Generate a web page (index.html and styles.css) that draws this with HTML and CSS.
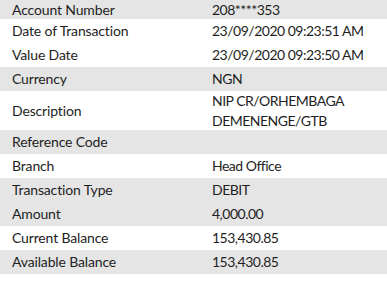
FILE: index.html
```html
<!DOCTYPE html>
<html>
<head>
<meta charset="utf-8">
<link rel="stylesheet" href="styles.css">
</head>
<body>
<div class="details">
  <div class="row shade first"><div class="label">Account Number</div><div class="value">208****353</div></div>
  <div class="row"><div class="label">Date of Transaction</div><div class="value">23/09/2020 09:23:51 AM</div></div>
  <div class="row"><div class="label">Value Date</div><div class="value">23/09/2020 09:23:50 AM</div></div>
  <div class="row shade"><div class="label">Currency</div><div class="value">NGN</div></div>
  <div class="row tall"><div class="label">Description</div><div class="value">NIP CR/ORHEMBAGA<br>DEMENENGE/GTB</div></div>
  <div class="row shade"><div class="label">Reference Code</div><div class="value"></div></div>
  <div class="row"><div class="label">Branch</div><div class="value">Head Office</div></div>
  <div class="row shade"><div class="label">Transaction Type</div><div class="value">DEBIT</div></div>
  <div class="row shade"><div class="label">Amount</div><div class="value">4,000.00</div></div>
  <div class="row"><div class="label">Current Balance</div><div class="value">153,430.85</div></div>
  <div class="row shade"><div class="label">Available Balance</div><div class="value">153,430.85</div></div>
</div>
</body>
</html>
```
FILE: styles.css
```css
html, body {
  margin: 0;
  padding: 0;
  background: #ffffff;
}
body {
  font-family: Lato, "Open Sans", sans-serif;
  font-size: 14px;
  color: #1e1e1e;
}
.details {
  display: flex;
  flex-direction: column;
}
.row {
  display: grid;
  grid-template-columns: 212px 1fr;
  align-items: center;
  height: 24px;
  line-height: 20px;
}
.row.first {
  height: 19px;
  line-height: 19px;
}
.row.shade {
  background: #e5e5e5;
}
.row.tall {
  height: 39px;
  line-height: 19.5px;
}
.label {
  padding-left: 12px;
  white-space: nowrap;
  letter-spacing: -0.15px;
}
.value {
  white-space: nowrap;
  letter-spacing: -0.5px;
}
```
